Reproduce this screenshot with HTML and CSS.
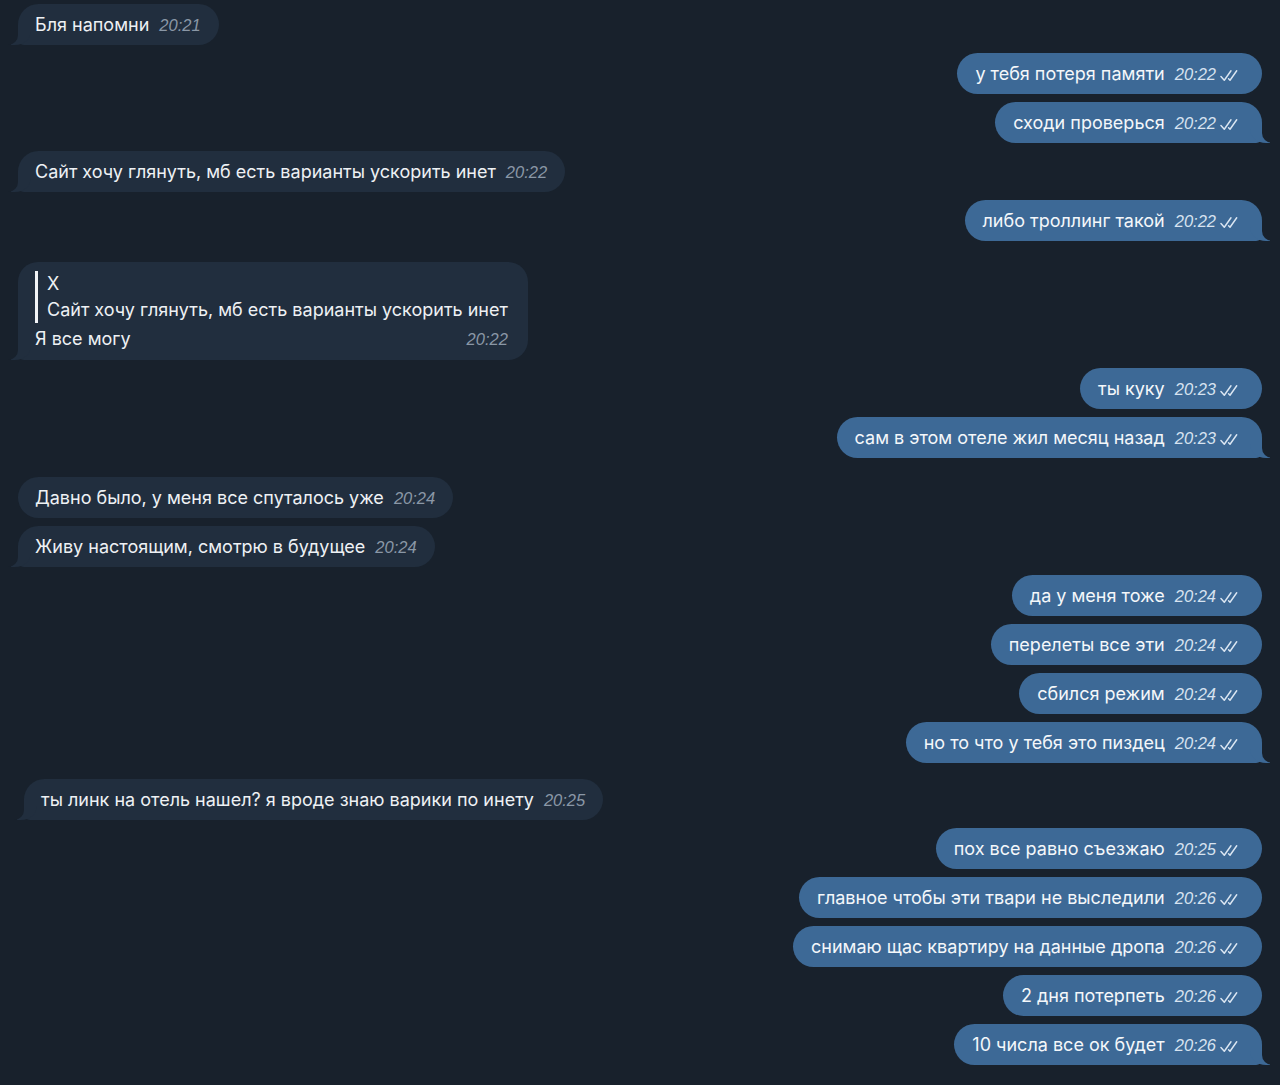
FILE: index.html
```html
<!DOCTYPE html>
<html lang="ru">
<head>
<meta charset="utf-8">
<title>Chat</title>
<link rel="stylesheet" href="styles.css">
</head>
<body>
<div class="chat">
  <div class="msg in tail first"><span class="text">Бля напомни</span><span class="meta">20:21</span></div>

  <div class="msg out"><span class="text">у тебя потеря памяти</span><span class="meta">20:22<svg class="ticks" viewBox="0 0 22 13"><path d="M1 7.5 L4.5 11.5 L11.5 1.5 M9 10 L10.5 11.5 L17.5 1.5" /></svg></span></div>
  <div class="msg out tail"><span class="text">сходи проверься</span><span class="meta">20:22<svg class="ticks" viewBox="0 0 22 13"><path d="M1 7.5 L4.5 11.5 L11.5 1.5 M9 10 L10.5 11.5 L17.5 1.5" /></svg></span></div>

  <div class="msg in tail"><span class="text">Сайт хочу глянуть, мб есть варианты ускорить инет</span><span class="meta">20:22</span></div>

  <div class="msg out tail"><span class="text">либо троллинг такой</span><span class="meta">20:22<svg class="ticks" viewBox="0 0 22 13"><path d="M1 7.5 L4.5 11.5 L11.5 1.5 M9 10 L10.5 11.5 L17.5 1.5" /></svg></span></div>

  <div class="msg in tail reply gap-r">
    <div class="quote">
      <div class="quote-author">Х</div>
      <div class="quote-text">Сайт хочу глянуть, мб есть варианты ускорить инет</div>
    </div>
    <div class="reply-line"><span class="text">Я все могу</span><span class="meta">20:22</span></div>
  </div>

  <div class="msg out"><span class="text">ты куку</span><span class="meta">20:23<svg class="ticks" viewBox="0 0 22 13"><path d="M1 7.5 L4.5 11.5 L11.5 1.5 M9 10 L10.5 11.5 L17.5 1.5" /></svg></span></div>
  <div class="msg out tail"><span class="text">сам в этом отеле жил месяц назад</span><span class="meta">20:23<svg class="ticks" viewBox="0 0 22 13"><path d="M1 7.5 L4.5 11.5 L11.5 1.5 M9 10 L10.5 11.5 L17.5 1.5" /></svg></span></div>

  <div class="msg in gap-l"><span class="text">Давно было, у меня все спуталось уже</span><span class="meta">20:24</span></div>
  <div class="msg in tail"><span class="text">Живу настоящим, смотрю в будущее</span><span class="meta">20:24</span></div>

  <div class="msg out"><span class="text">да у меня тоже</span><span class="meta">20:24<svg class="ticks" viewBox="0 0 22 13"><path d="M1 7.5 L4.5 11.5 L11.5 1.5 M9 10 L10.5 11.5 L17.5 1.5" /></svg></span></div>
  <div class="msg out"><span class="text">перелеты все эти</span><span class="meta">20:24<svg class="ticks" viewBox="0 0 22 13"><path d="M1 7.5 L4.5 11.5 L11.5 1.5 M9 10 L10.5 11.5 L17.5 1.5" /></svg></span></div>
  <div class="msg out"><span class="text">сбился режим</span><span class="meta">20:24<svg class="ticks" viewBox="0 0 22 13"><path d="M1 7.5 L4.5 11.5 L11.5 1.5 M9 10 L10.5 11.5 L17.5 1.5" /></svg></span></div>
  <div class="msg out tail"><span class="text">но то что у тебя это пиздец</span><span class="meta">20:24<svg class="ticks" viewBox="0 0 22 13"><path d="M1 7.5 L4.5 11.5 L11.5 1.5 M9 10 L10.5 11.5 L17.5 1.5" /></svg></span></div>

  <div class="msg in tail shifted gap-m"><span class="text">ты линк на отель нашел? я вроде знаю варики по инету</span><span class="meta">20:25</span></div>

  <div class="msg out"><span class="text">пох все равно съезжаю</span><span class="meta">20:25<svg class="ticks" viewBox="0 0 22 13"><path d="M1 7.5 L4.5 11.5 L11.5 1.5 M9 10 L10.5 11.5 L17.5 1.5" /></svg></span></div>
  <div class="msg out"><span class="text">главное чтобы эти твари не выследили</span><span class="meta">20:26<svg class="ticks" viewBox="0 0 22 13"><path d="M1 7.5 L4.5 11.5 L11.5 1.5 M9 10 L10.5 11.5 L17.5 1.5" /></svg></span></div>
  <div class="msg out"><span class="text">снимаю щас квартиру на данные дропа</span><span class="meta">20:26<svg class="ticks" viewBox="0 0 22 13"><path d="M1 7.5 L4.5 11.5 L11.5 1.5 M9 10 L10.5 11.5 L17.5 1.5" /></svg></span></div>
  <div class="msg out"><span class="text">2 дня потерпеть</span><span class="meta">20:26<svg class="ticks" viewBox="0 0 22 13"><path d="M1 7.5 L4.5 11.5 L11.5 1.5 M9 10 L10.5 11.5 L17.5 1.5" /></svg></span></div>
  <div class="msg out tail"><span class="text">10 числа все ок будет</span><span class="meta">20:26<svg class="ticks" viewBox="0 0 22 13"><path d="M1 7.5 L4.5 11.5 L11.5 1.5 M9 10 L10.5 11.5 L17.5 1.5" /></svg></span></div>
</div>
</body>
</html>
```

FILE: styles.css
```css
* { box-sizing: border-box; }

html, body {
  margin: 0;
  padding: 0;
  background: #18212c;
  height: 100%;
}

body {
  font-family: Inter, "Liberation Sans", Arial, sans-serif;
  color: #eef1f4;
}

.chat {
  display: flex;
  flex-direction: column;
  padding: 4px 18px 0 18px;
  gap: 8px;
}

.msg {
  position: relative;
  display: flex;
  align-items: baseline;
  height: 41px;
  line-height: 42px;
  border-radius: 21px;
  font-size: 18px;
  white-space: nowrap;
}

.msg.in {
  align-self: flex-start;
  background: #212e3e;
  padding: 0 18px 0 17px;
}

.msg.out {
  align-self: flex-end;
  background: #3d6996;
  padding: 0 21px 0 18px;
  color: #f4f7fa;
}

.msg.shifted { margin-left: 6px; }
.gap-r { margin-top: 13px; }
.gap-l { margin-top: 11px; }
.gap-m { margin-top: 8px; }

.meta {
  font-family: "Liberation Sans", Arial, sans-serif;
  font-style: italic;
  font-size: 16.5px;
  margin-left: 10px;
  display: inline-flex;
  align-items: center;
}

.in .meta { color: #8a97a6; }
.out .meta { color: #d7e3f0; }

.ticks {
  width: 21px;
  height: 13px;
  margin-left: 4px;
  align-self: center;
  fill: none;
  stroke: #dbe6f2;
  stroke-width: 1.5;
  stroke-linecap: round;
  stroke-linejoin: round;
  position: relative;
  top: 1px;
}

/* tails */
.msg.tail::before,
.msg.tail::after {
  content: "";
  position: absolute;
  bottom: 0;
  height: 20px;
}

.msg.in.tail { border-bottom-left-radius: 6px; }
.msg.out.tail { border-bottom-right-radius: 6px; }

.msg.in.tail::before {
  left: -7px;
  width: 20px;
  background: #212e3e;
  border-bottom-right-radius: 16px 14px;
}
.msg.in.tail::after {
  left: -10px;
  width: 10px;
  background: #18212c;
  border-bottom-right-radius: 10px;
}

.msg.out.tail::before {
  right: -8px;
  width: 20px;
  background: #3d6996;
  border-bottom-left-radius: 16px 14px;
}
.msg.out.tail::after {
  right: -10px;
  width: 10px;
  background: #18212c;
  border-bottom-left-radius: 10px;
}

/* reply bubble */
.msg.reply {
  flex-direction: column;
  align-items: stretch;
  height: auto;
  line-height: normal;
  padding: 9px 20px 7px 17px;
  border-radius: 20px;
  border-bottom-left-radius: 6px;
}

.quote {
  border-left: 3px solid #f2f4f7;
  padding-left: 9px;
  line-height: 26px;
  margin-bottom: 2px;
}

.quote-author,
.quote-text { font-size: 18px; }

.reply-line {
  display: flex;
  justify-content: space-between;
  align-items: baseline;
  line-height: 28px;
}
```
